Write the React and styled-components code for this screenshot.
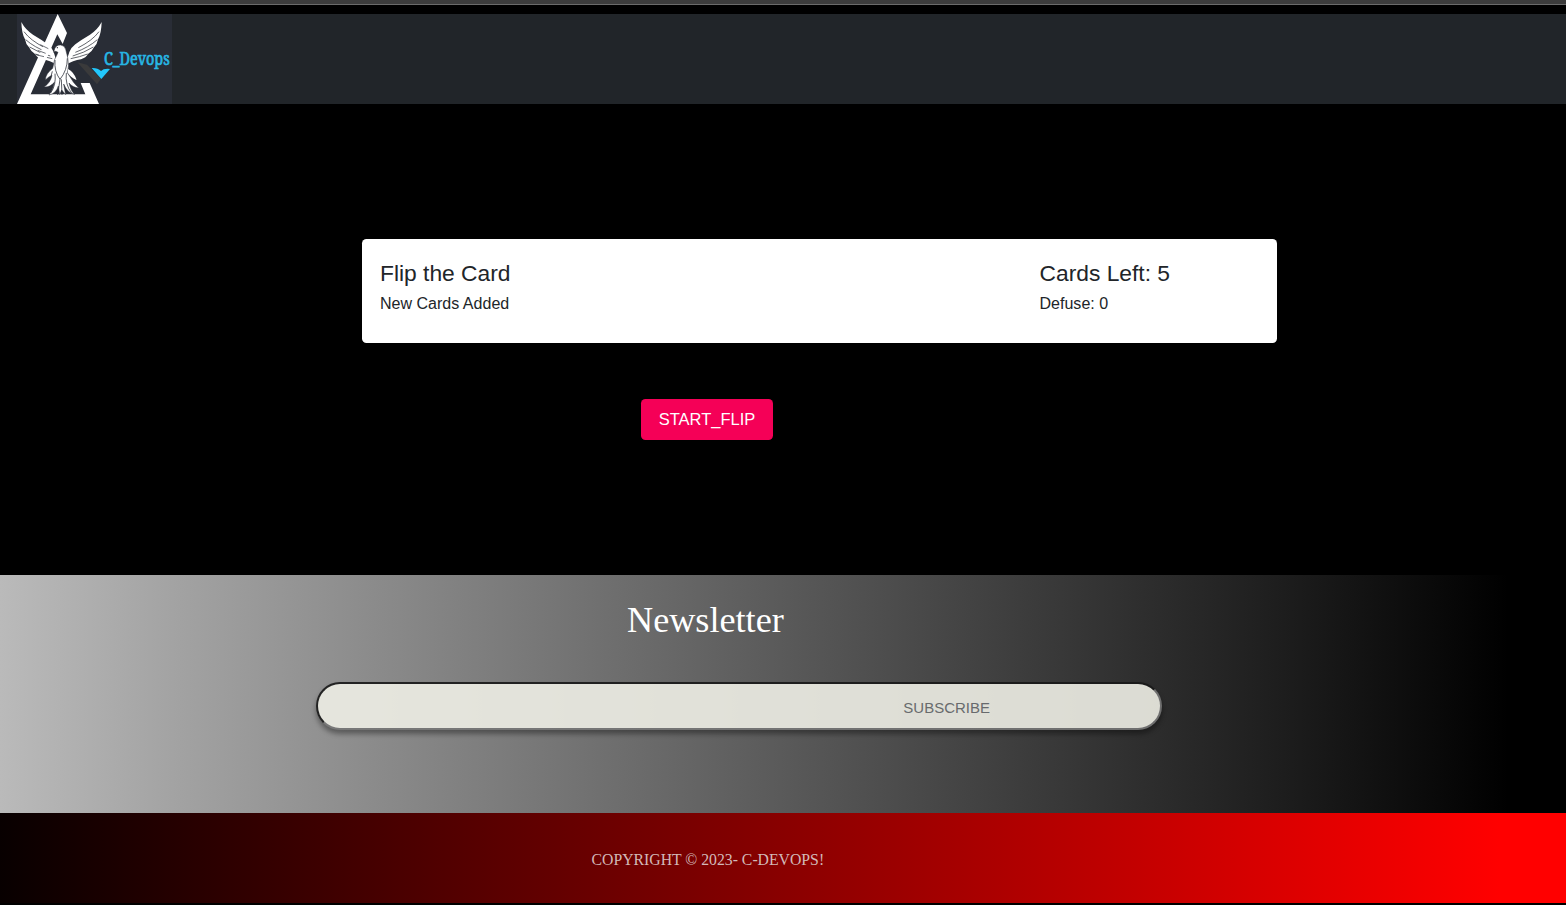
import React from "react";
import styled, { createGlobalStyle } from "styled-components";

const GlobalStyle = createGlobalStyle`
  * { box-sizing: border-box; }
  body { margin: 0; background: #000; overflow: hidden; font-family: "Liberation Sans", Arial, sans-serif; }
  h1, h5, p { margin: 0; font-weight: 400; }
`;

const Page = styled.div`
  width: 100%;
  height: 905px;
  display: flex;
  flex-direction: column;
  background: #000;
`;

const TopStrip = styled.div`
  height: 5px;
  margin-bottom: 9px;
  background: #3c3c3c;
  border-bottom: 1px solid #6b6b6b;
`;

const Navbar = styled.nav`
  height: 90px;
  padding-left: 17px;
  background: #212529;
`;

const LogoSvg = styled.svg`
  display: block;
  width: 155px;
  height: 90px;
`;

const Main = styled.main`
  height: 471px;
  padding-top: 135px;
`;

const Card = styled.section`
  width: 915px;
  height: 104px;
  margin-left: 362px;
  padding: 21px 18px;
  display: grid;
  grid-template-columns: 659.5px 1fr;
  background: #fff;
  border-radius: 4.5px;
  color: #212529;
`;

const CardTitle = styled.h5`
  font-size: 22.8px;
  line-height: 27px;
  margin-bottom: 3px;
`;

const CardText = styled.p`
  font-size: 16.05px;
  line-height: 27px;
`;

const FlipButton = styled.button`
  display: block;
  width: 132px;
  height: 41px;
  margin: 56px 0 0 641px;
  padding: 0;
  border: 0;
  border-radius: 4.5px;
  background: #f50057;
  color: #fff;
  font: 16.5px/41px "Liberation Sans", Arial, sans-serif;
`;

const Newsletter = styled.section`
  height: 238px;
  padding-top: 18px;
  background: linear-gradient(90deg, #bababa 0, #a2a2a2 180px, #7c7c7c 500px, #1b1b1b 1300px, #000 1508px);
`;

const NewsletterTitle = styled.h1`
  margin-left: 627px;
  color: #fff;
  font-family: "Liberation Serif", "Times New Roman", serif;
  font-size: 36.2px;
  line-height: 54px;
`;

const EmailInput = styled.input`
  display: block;
  width: 846px;
  height: 48px;
  margin: 35px 0 0 316px;
  padding: 3px 170px 0 0;
  border: 2px solid;
  border-color: #181818 #767676 #767676 #181818;
  border-radius: 24px;
  background: #efefe6;
  opacity: 0.9;
  box-shadow: 0 4px 5px rgba(0, 0, 0, 0.4);
  font: 15px "Liberation Sans", Arial, sans-serif;
  text-align: right;
  &::placeholder { color: #6c6f72; }
`;

const Footer = styled.footer`
  height: 90px;
  padding: 33px 0 0 591.5px;
  background: linear-gradient(90deg, #080000 0, #f00 1500px);
  color: #d2b9b9;
  font-family: "Liberation Serif", "Times New Roman", serif;
  font-size: 15.75px;
  line-height: 27px;
`;

const Wing = () => (
  <g>
    <path fill="#fff" d="M173 196 Q150 181 126 178 Q111 173 105 162 Q93 155 87 142 Q77 132 75 118 Q65 101 64 66 Q76 89 99 104 Q125 119 143 133 Q156 143 161 156 Q167 174 173 196Z" />
    <g fill="none" stroke="#292d36" strokeWidth="2.2">
      <path d="M72 95Q91 121 134 143" />
      <path d="M77 119Q103 142 143 157" />
      <path d="M89 141Q116 158 151 168" />
      <path d="M106 162Q130 171 157 176" />
    </g>
  </g>
);

const Logo = () => (
  <LogoSvg viewBox="51 42 465 270" preserveAspectRatio="none" role="img" aria-label="C_Devops">
    <rect x="51" y="42" width="465" height="270" fill="#292d36" />
    <path fill="#3a3a3b" d="M232 187L261 194L303 237L291 253Z" />
    <path fill="#22c8fc" d="M275 204Q293 203 303 213Q311 205 330 207L304 237Z" />
    <Wing />
    <g transform="translate(369 0) scale(-1 1)"><Wing /></g>
    <path fill="#fff" d="M173 42L201 99L188 132L172 103L92 283H256L242 249H269L297 312H51Z" />
    <g fill="none" stroke="#292d36" strokeWidth="2">
      <path d="M113 151L137 160M107 164L132 170M121 134L145 146" />
    </g>
    <path fill="#fff" stroke="#292d36" strokeWidth="1.6" d="M164 146Q169 134 182 135Q194 136 197 148L203 172Q209 198 202 218L220 246Q230 259 237 264Q218 263 207 249Q214 276 224 283Q202 279 191 252L197 284L185 270L179 284L175 258Q169 280 147 285Q159 270 163 247Q151 262 132 261Q151 249 156 226Q143 232 136 240Q137 221 158 205L164 178Q170 167 174 157Q164 151 161 157Z" />
    <g fill="none" stroke="#292d36" strokeWidth="2.3">
      <path d="M165 180Q162 214 180 238Q202 211 202 175" />
      <path d="M180 238L173 285M184 238L186 285M165 221Q169 255 152 279M199 219Q195 255 215 279M157 214Q153 235 145 246" />
    </g>
    <path fill="#fff" d="M204 207Q222 216 230 240Q212 232 203 218Z" />
    <circle cx="172" cy="143" r="2" fill="#292d36" />
    <text
      transform="translate(312 196) scale(1 1.2)"
      fill="#27b7e5" stroke="#27b7e5" strokeWidth="1.8"
      fontFamily="Noto Serif, DejaVu Serif, Liberation Serif, serif"
      fontSize="43" textLength="197" lengthAdjust="spacingAndGlyphs"
    >C_Devops</text>
  </LogoSvg>
);

export default function App() {
  return (
    <Page>
      <GlobalStyle />
      <TopStrip />
      <Navbar><Logo /></Navbar>
      <Main>
        <Card>
          <div>
            <CardTitle>Flip the Card</CardTitle>
            <CardText>New Cards Added</CardText>
          </div>
          <div>
            <CardTitle>Cards Left: 5</CardTitle>
            <CardText>Defuse: 0</CardText>
          </div>
        </Card>
        <FlipButton>START_FLIP</FlipButton>
      </Main>
      <Newsletter>
        <NewsletterTitle>Newsletter</NewsletterTitle>
        <EmailInput placeholder="SUBSCRIBE" />
      </Newsletter>
      <Footer>COPYRIGHT © 2023- C-DEVOPS!</Footer>
    </Page>
  );
}
